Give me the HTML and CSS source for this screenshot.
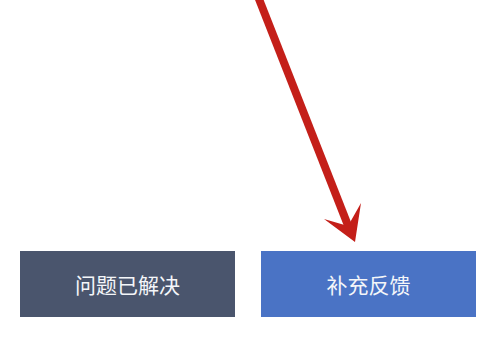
FILE: index.html
```html
<!DOCTYPE html>
<html lang="zh-CN">
<head>
<meta charset="utf-8">
<link rel="stylesheet" href="styles.css">
</head>
<body>
<div class="page">
  <div class="actions">
    <div class="btn btn-resolved">问题已解决</div>
    <div class="btn btn-feedback">补充反馈</div>
  </div>
  <svg class="annotation" width="504" height="339" viewBox="0 0 504 339">
    <line x1="257" y1="-6" x2="349" y2="228" stroke="#c41f19" stroke-width="8" stroke-linecap="butt"/>
    <polygon points="355,242 324,219 348,226 361,203" fill="#c41f19"/>
  </svg>
</div>
</body>
</html>
```

FILE: styles.css
```css
html, body {
  margin: 0;
  padding: 0;
  background: #ffffff;
}
.page {
  position: relative;
  width: 504px;
  height: 339px;
  overflow: hidden;
  font-family: "Noto Sans CJK SC", "Noto Sans", sans-serif;
}
.actions {
  display: flex;
  gap: 26px;
  padding: 251px 0 0 20px;
}
.btn {
  width: 215px;
  height: 66px;
  display: flex;
  align-items: center;
  justify-content: center;
  color: #f4f6f9;
  font-size: 21px;
  letter-spacing: 0;
}
.btn-resolved {
  background: #4a556d;
}
.btn-feedback {
  background: #4a73c5;
}
.annotation {
  position: absolute;
  left: 0;
  top: 0;
  pointer-events: none;
}
```
